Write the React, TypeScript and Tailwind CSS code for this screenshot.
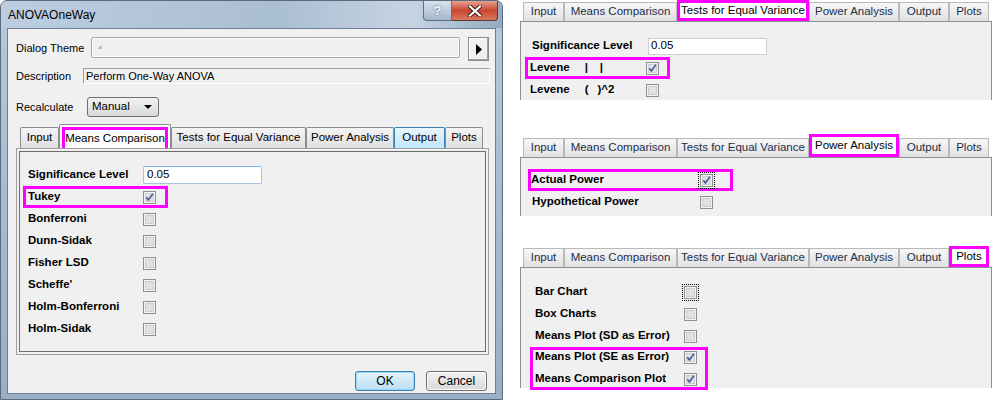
import React from 'react';

type Tab = { label: string; w: string };

const LEFT_TABS: Tab[] = [
  { label: 'Input', w: 'w-[39px]' },
  { label: 'Means Comparison', w: 'w-[112px]' },
  { label: 'Tests for Equal Variance', w: 'w-[135px]' },
  { label: 'Power Analysis', w: 'w-[88px]' },
  { label: 'Output', w: 'w-[51px]' },
  { label: 'Plots', w: 'w-[38px]' },
];

const RIGHT_TABS: Tab[] = [
  { label: 'Input', w: 'w-[41px]' },
  { label: 'Means Comparison', w: 'w-[113px]' },
  { label: 'Tests for Equal Variance', w: 'w-[132px]' },
  { label: 'Power Analysis', w: 'w-[90px]' },
  { label: 'Output', w: 'w-[50px]' },
  { label: 'Plots', w: 'w-[40px]' },
];

const Check = ({ checked, focus }: { checked?: boolean; focus?: boolean }) => (
  <span className={focus ? 'inline-flex outline outline-1 outline-dotted outline-black outline-offset-1' : 'inline-flex'}>
    <svg width="13" height="13" viewBox="0 0 13 13">
      <rect x="0.5" y="0.5" width="12" height="12" fill="#f4f4f4" stroke="#8f8f8f" />
      <rect x="2.5" y="2.5" width="8" height="8" fill="#e2e2e2" stroke="#cdcdcd" />
      {checked && <path d="M3.3 6.4 L5.4 8.9 L9.9 2.8" fill="none" stroke="#4a5e96" strokeWidth="1.7" />}
    </svg>
  </span>
);

// one label + checkbox row, optionally boxed in magenta
const Row = ({ label, checked, hl, focus, labelW, boxW }: { label: React.ReactNode; checked?: boolean; hl?: boolean; focus?: boolean; labelW: string; boxW: string }) => (
  <div className={`h-[22px] flex items-center border-[3px] pl-[2px] ${boxW} ${hl ? 'border-[#ff00ff]' : 'border-transparent'}`}>
    <span className={`${labelW} font-bold text-[11.5px] text-black whitespace-nowrap`}>{label}</span>
    <Check checked={checked} focus={focus} />
  </div>
);

const LeftTabs = () => (
  <div className="flex items-end h-[24px] pl-[4px]">
    {LEFT_TABS.map((t, i) => {
      if (i === 1)
        return (
          <div key={t.label} className={`${t.w} h-[24px] bg-white border border-b-0 border-[#898c95] rounded-t-[2px] px-[2px] pt-[2px]`}>
            <div className="h-[21px] border-[3px] border-b-0 border-[#ff00ff] flex items-center justify-center whitespace-nowrap text-[11.5px] text-black">{t.label}</div>
          </div>
        );
      if (i === 4)
        return (
          <div key={t.label} className={`${t.w} h-[21px] border border-b-0 border-[#3c7fb1] rounded-t-[2px] bg-gradient-to-b from-[#eaf6fd] to-[#bee6fd] flex items-center justify-center whitespace-nowrap text-[11.5px] text-black`}>{t.label}</div>
        );
      return (
        <div key={t.label} className={`${t.w} h-[21px] border border-b-0 border-[#898c95] rounded-t-[2px] bg-gradient-to-b from-[#f4f4f4] to-[#e0e0e0] flex items-center justify-center whitespace-nowrap text-[11.5px] text-black`}>{t.label}</div>
      );
    })}
  </div>
);

const RightTabs = ({ active }: { active: number }) => (
  <div className="flex items-end pl-[3px] h-full">
    {RIGHT_TABS.map((t, i) =>
      i === active ? (
        <div key={t.label} className={`${t.w} h-full bg-white border-[3px] border-[#ff00ff] flex items-center justify-center whitespace-nowrap text-[11.5px] text-black`}>{t.label}</div>
      ) : (
        <div key={t.label} className={`${t.w} h-[19px] border-l border-r border-t border-[#b9b9b9] bg-gradient-to-b from-[#f7f7f7] to-[#e1e1e1] flex items-center justify-center whitespace-nowrap text-[11.5px] text-[#1d2f4d]`}>{t.label}</div>
      )
    )}
  </div>
);

const Dialog = () => (
  <div className="w-[503px] h-[400px] shrink-0 rounded-t-[7px] border border-[#5a6b7d] bg-gradient-to-b from-[#b7c9dc] to-[#98afc6] flex flex-col">
    {/* title bar */}
    <div className="h-[27px] flex items-start bg-[linear-gradient(to_right,#bccde0,#aabed2_55%,#c6d4e2_82%,#93abc3)] rounded-t-[6px]">
      <span className="ml-[7px] mt-[5px] text-[12px] text-black">ANOVAOneWay</span>
      <div className="ml-auto mr-[4px] flex">
        <div className="w-[29px] h-[20px] border border-[#5b6f84] border-t-0 rounded-bl-[4px] bg-gradient-to-b from-[#d9e3ed] to-[#a4b7ca] flex items-center justify-center text-[13px] font-bold text-white [text-shadow:0_0_2px_#34495e]">?</div>
        <div className="w-[46px] h-[20px] border border-l-0 border-[#5b3a33] border-t-0 rounded-br-[4px] bg-gradient-to-b from-[#e5a08f] via-[#c8462f] to-[#d9765f] flex items-center justify-center">
          <svg width="14" height="12" viewBox="0 0 14 12">
            <path d="M2 1.5 L12 10.5 M12 1.5 L2 10.5" stroke="#3a1a14" strokeWidth="4" strokeLinecap="square" />
            <path d="M2 1.5 L12 10.5 M12 1.5 L2 10.5" stroke="#fff" strokeWidth="2.2" strokeLinecap="square" />
          </svg>
        </div>
      </div>
    </div>

    {/* client area */}
    <div className="mx-[6px] mb-[5px] h-[366px] border border-[#6d7f92] bg-[#f0f0f0] flex flex-col pl-[8px] text-[11px] text-black">
      <div className="mt-[8px] h-[24px] flex items-start">
        <span className="w-[75px] mt-[3px]">Dialog Theme</span>
        <div className="w-[369px] h-[21px] rounded-[2px] border border-[#a9a9a9] bg-[#f0f0f0] shadow-[inset_0_0_0_1px_#fff] flex items-center pl-[6px] text-[8px] text-[#8a8a8a]">×</div>
        <div className="ml-[8px] w-[21px] h-[24px] border border-[#8a8a8a] bg-[#f0f0f0] shadow-[inset_-1px_-1px_0_#a0a0a0,inset_1px_1px_0_#fff] flex items-center justify-center">
          <svg width="6" height="11" viewBox="0 0 6 11"><path d="M0 0 L6 5.5 L0 11 Z" fill="#000" /></svg>
        </div>
      </div>
      <div className="mt-[7px] h-[16px] flex items-center">
        <span className="w-[67px]">Description</span>
        <div className="w-[407px] h-[16px] border-t border-l border-[#a0a0a0] border-b border-r border-b-white border-r-white flex items-center pl-[2px] text-[11px]">Perform One-Way ANOVA</div>
      </div>
      <div className="mt-[13px] h-[20px] flex items-center">
        <span className="w-[71px]">Recalculate</span>
        <div className="w-[72px] h-[20px] rounded-[3px] border border-[#707070] bg-gradient-to-b from-[#f2f2f2] to-[#dadada] flex items-center pl-[4px] pr-[6px]">
          <span className="text-[11.5px]">Manual</span>
          <svg className="ml-auto" width="8" height="4" viewBox="0 0 8 4"><path d="M0 0 H8 L4 4 Z" fill="#000" /></svg>
        </div>
      </div>

      <div className="mt-[7px]">
        <LeftTabs />
      </div>
      <div className="w-[473px] h-[207px] border border-[#a0a0a0] p-[2px]">
        <div className="h-full border border-[#6e6e6e] pt-[12px] pl-[3px]">
          <div className="h-[22px] flex items-center pl-[5px]">
            <span className="w-[115px] font-bold text-[11.5px] whitespace-nowrap">Significance Level</span>
            <div className="w-[119px] h-[18px] rounded-[2px] border border-[#a4c3e6] border-t-[#7eb4ea] bg-white flex items-center pl-[3px] text-[11.5px]">0.05</div>
          </div>
          <Row label="Tukey" checked hl labelW="w-[115px]" boxW="w-[145px]" />
          <Row label="Bonferroni" labelW="w-[115px]" boxW="w-[145px]" />
          <Row label="Dunn-Sidak" labelW="w-[115px]" boxW="w-[145px]" />
          <Row label="Fisher LSD" labelW="w-[115px]" boxW="w-[145px]" />
          <Row label="Scheffe'" labelW="w-[115px]" boxW="w-[145px]" />
          <Row label="Holm-Bonferroni" labelW="w-[115px]" boxW="w-[145px]" />
          <Row label="Holm-Sidak" labelW="w-[115px]" boxW="w-[145px]" />
        </div>
      </div>

      <div className="mt-[16px] flex justify-end pr-[8px] gap-[11px]">
        <button className="w-[60px] h-[20px] rounded-[3px] border border-[#3c7fb1] shadow-[inset_0_0_0_1px_#9bd6f5] bg-gradient-to-b from-[#e5f4fc] to-[#b9dff4] text-[12px] text-black">OK</button>
        <button className="w-[61px] h-[20px] rounded-[3px] border border-[#707070] shadow-[inset_0_0_0_1px_#fbfbfb] bg-gradient-to-b from-[#f2f2f2] to-[#d9d9d9] text-[12px] text-black">Cancel</button>
      </div>
    </div>
  </div>
);

export default function App() {
  return (
    <div className="w-[994px] h-[402px] bg-white flex font-['Liberation_Sans',Arial,sans-serif] overflow-hidden">
      <Dialog />

      <div className="ml-[17px] w-[472px] flex flex-col">
        {/* Tests for Equal Variance */}
        <div className="h-[21px]"><RightTabs active={2} /></div>
        <div className="h-[79px] bg-[#f0f0f0] border-t border-l border-r border-[#8e8f8f] pt-[13px] pl-[4px]">
          <div className="h-[22px] flex items-center pl-[7px]">
            <span className="w-[116px] font-bold text-[11.5px] whitespace-nowrap">Significance Level</span>
            <div className="w-[119px] h-[17px] border border-[#cfcfcf] bg-white flex items-center pl-[2px] text-[11.5px]">0.05</div>
          </div>
          <Row
            label={<>Levene<span className="ml-[15px]">|</span><span className="ml-[12px]">|</span></>}
            checked hl labelW="w-[116px]" boxW="w-[145px]"
          />
          <Row
            label={<>Levene<span className="ml-[15px]">(</span><span className="ml-[9px]">)^2</span></>}
            labelW="w-[116px]" boxW="w-[145px]"
          />
        </div>

        {/* Power Analysis */}
        <div className="mt-[34px] h-[23px]"><RightTabs active={3} /></div>
        <div className="h-[59px] bg-[#f0f0f0] border-t border-l border-r border-[#8e8f8f] pt-[11px] pl-[7px]">
          <div className="h-[22px] w-[205px] flex items-center border-[3px] border-[#ff00ff]">
            <span className="w-[169px] font-bold text-[11.5px]">Actual Power</span>
            <Check checked focus />
          </div>
          <div className="h-[22px] w-[205px] flex items-center border-[3px] border-transparent pl-[1px]">
            <span className="w-[168px] font-bold text-[11.5px]">Hypothetical Power</span>
            <Check />
          </div>
        </div>

        {/* Plots */}
        <div className="mt-[30px] h-[21px]"><RightTabs active={5} /></div>
        <div className="h-[121px] bg-[#f0f0f0] border-t border-l border-r border-[#8e8f8f] pt-[13px] pl-[9px]">
          <Row label="Bar Chart" focus labelW="w-[149px]" boxW="w-[178px]" />
          <Row label="Box Charts" labelW="w-[149px]" boxW="w-[178px]" />
          <Row label="Means Plot (SD as Error)" labelW="w-[149px]" boxW="w-[178px]" />
          <div className="w-[178px] border-[3px] border-[#ff00ff] pb-[1px]">
            <div className="h-[14px] flex items-center pl-[2px]">
              <span className="w-[149px] font-bold text-[11.5px] whitespace-nowrap">Means Plot (SE as Error)</span>
              <Check checked />
            </div>
            <div className="mt-[8px] h-[14px] flex items-center pl-[2px]">
              <span className="w-[149px] font-bold text-[11.5px] whitespace-nowrap">Means Comparison Plot</span>
              <Check checked />
            </div>
          </div>
        </div>
      </div>
    </div>
  );
}
